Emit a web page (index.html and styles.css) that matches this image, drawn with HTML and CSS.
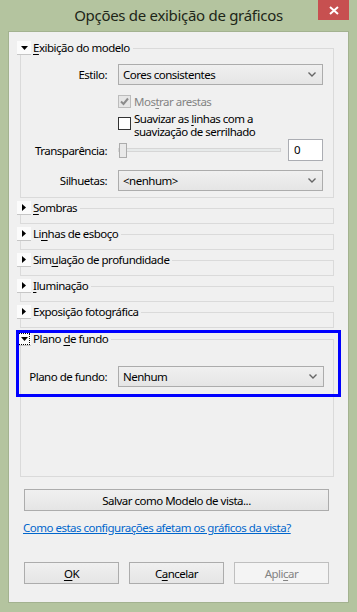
FILE: index.html
```html
<!doctype html>
<html>
  <head>
    <meta charset="utf-8">
    <title>Opções de exibição de gráficos</title>
    <link rel="stylesheet" href="styles.css">
  </head>
  <body>
    <div class="window">
      <header class="titlebar">
        <span></span>
        <h1 class="title">Opções de exibição de gráficos</h1>
        <button class="close" title="Fechar">
          <svg width="10" height="9" viewBox="0 0 10 9"><path d="M1 1 9 8M9 1 1 8" stroke="#fff" stroke-width="2" fill="none"/></svg>
        </button>
      </header>

      <main class="client">
        <!-- model display -->
        <section class="group">
          <div class="group-head">
            <span class="expander"><svg width="7" height="4" viewBox="0 0 7 4"><path d="M0 0h7L3.5 4z"/></svg></span>
            <span class="group-title"><u>E</u>xibição do modelo</span>
            <span class="group-rule"></span>
          </div>
          <div class="group-body model-body">
            <div class="row">
              <span class="label">Estilo:</span>
              <div class="combo">
                <span class="combo-value">Cores consistentes</span>
                <svg width="8" height="5" viewBox="0 0 8 5"><path d="M0.5 0.5 4 4 7.5 0.5" fill="none" stroke="#666" stroke-width="1.4"/></svg>
              </div>
            </div>
            <div class="check check-edges disabled">
              <span class="box"><svg width="11" height="11" viewBox="0 0 11 11"><path d="M2 5.5 4.5 8 9 2.5" fill="none" stroke="#8c8c8c" stroke-width="2"/></svg></span>
              <span>Mos<u>t</u>rar arestas</span>
            </div>
            <div class="check check-smooth">
              <span class="box"></span>
              <span class="check-text">
                <span class="line">Suavizar as <u>l</u>inhas com a</span>
                <span class="line">suavização de serrilhado</span>
              </span>
            </div>
            <div class="row row-transp">
              <span class="label">Transparência:</span>
              <div class="slider">
                <span class="track"></span>
                <span class="thumb"></span>
              </div>
              <span class="textbox">0</span>
            </div>
            <div class="row row-silh">
              <span class="label">Silhuetas:</span>
              <div class="combo">
                <span class="combo-value">&lt;nenhum&gt;</span>
                <svg width="8" height="5" viewBox="0 0 8 5"><path d="M0.5 0.5 4 4 7.5 0.5" fill="none" stroke="#666" stroke-width="1.4"/></svg>
              </div>
            </div>
          </div>
        </section>

        <section class="group">
          <div class="group-head">
            <span class="expander"><svg width="4" height="7" viewBox="0 0 4 7"><path d="M0 0v7l4-3.5z"/></svg></span>
            <span class="group-title"><u>S</u>ombras</span>
            <span class="group-rule"></span>
          </div>
          <div class="group-body"></div>
        </section>

        <section class="group">
          <div class="group-head">
            <span class="expander"><svg width="4" height="7" viewBox="0 0 4 7"><path d="M0 0v7l4-3.5z"/></svg></span>
            <span class="group-title">Li<u>n</u>has de esboço</span>
            <span class="group-rule"></span>
          </div>
          <div class="group-body"></div>
        </section>

        <section class="group">
          <div class="group-head">
            <span class="expander"><svg width="4" height="7" viewBox="0 0 4 7"><path d="M0 0v7l4-3.5z"/></svg></span>
            <span class="group-title">Sim<u>u</u>lação de profundidade</span>
            <span class="group-rule"></span>
          </div>
          <div class="group-body"></div>
        </section>

        <section class="group">
          <div class="group-head">
            <span class="expander"><svg width="4" height="7" viewBox="0 0 4 7"><path d="M0 0v7l4-3.5z"/></svg></span>
            <span class="group-title"><u>I</u>luminação</span>
            <span class="group-rule"></span>
          </div>
          <div class="group-body"></div>
        </section>

        <section class="group">
          <div class="group-head">
            <span class="expander"><svg width="4" height="7" viewBox="0 0 4 7"><path d="M0 0v7l4-3.5z"/></svg></span>
            <span class="group-title">Exposição fotográfica</span>
            <span class="group-rule"></span>
          </div>
          <div class="group-body"></div>
        </section>

        <!-- background, highlighted -->
        <section class="group group-bg">
          <div class="callout"></div>
          <div class="group-head">
            <span class="expander focus"><svg width="7" height="4" viewBox="0 0 7 4"><path d="M0 0h7L3.5 4z"/></svg></span>
            <span class="group-title">Plano <u>d</u>e fundo</span>
            <span class="group-rule"></span>
          </div>
          <div class="group-body bg-body">
            <div class="row">
              <span class="label">Plano de fundo:</span>
              <div class="combo">
                <span class="combo-value">Nenhum</span>
                <svg width="8" height="5" viewBox="0 0 8 5"><path d="M0.5 0.5 4 4 7.5 0.5" fill="none" stroke="#666" stroke-width="1.4"/></svg>
              </div>
            </div>
          </div>
        </section>

        <button class="btn btn-save">Salvar como Modelo de vista...</button>
        <a class="help-link" href="#">Como estas configurações afetam os gráficos da vista?</a>

        <div class="actions">
          <button class="btn"><u>O</u>K</button>
          <button class="btn">C<u>a</u>ncelar</button>
          <button class="btn" disabled>Apli<u>c</u>ar</button>
        </div>
      </main>
    </div>
  </body>
</html>
```

FILE: styles.css
```css
* {
  margin: 0;
  padding: 0;
  box-sizing: border-box;
}

html, body {
  width: 100%;
  height: 100%;
  overflow: hidden;
}

body {
  background: #b4c49f;
  font-family: "Noto Sans", "Open Sans", sans-serif;
  font-size: 11.5px;
  letter-spacing: -0.5px;
  color: #000;
}

u {
  text-decoration-thickness: 1px;
  text-underline-offset: 2px;
}

.window {
  height: 612px;
  display: flex;
  flex-direction: column;
  padding: 0 8px 9px;
}

.titlebar {
  height: 31px;
  display: grid;
  grid-template-columns: 1fr auto 1fr;
  align-items: start;
}

.title {
  font-weight: normal;
  font-size: 15px;
  letter-spacing: -0.3px;
  line-height: 30px;
  color: #1e2618;
}

.close {
  justify-self: end;
  width: 31px;
  height: 20px;
  border: none;
  background: #c75050;

  display: flex;
  align-items: center;
  justify-content: center;
}

.client {
  flex: 1;
  background: #f0f0f0;
  border: 1px solid #a3b290;
  padding: 9px 14px 0 8px;

  display: flex;
  flex-direction: column;
}

/* groups */

.group {
  position: relative;
}

.group + .group {
  margin-top: 3px;
}

.group-bg {
  margin-top: 4px !important;
}

.group-head {
  display: flex;
  align-items: center;
  height: 14px;
}

.expander {
  width: 14px;
  height: 14px;
  background: #fbfbfb;
  border-bottom: 1px solid #c6c6c6;

  display: flex;
  align-items: center;
  justify-content: center;
}

.expander.focus {
  outline: 1px dotted #000;
  outline-offset: -2px;
}

.group-title {
  padding: 0 3px 0 2px;
  line-height: 14px;
  white-space: nowrap;
}

.group-rule {
  flex: 1;
  align-self: stretch;
  margin-top: 7px;
  border-top: 1px solid #dadada;
  border-right: 1px solid #dadada;
}

.group-body {
  margin-left: 3px;
  height: 9px;
  border: 1px solid #dadada;
  border-top: none;
}

.model-body {
  height: auto;
  padding: 9px 10px 6px 0;
}

.bg-body {
  height: 131px;
  padding: 20px 9px 0 0;
}

.callout {
  position: absolute;
  left: -1px;
  top: -2px;
  width: 325px;
  height: 67px;
  border: 3px solid #0000ff;
}

/* form rows */

.row {
  display: flex;
  align-items: center;
}

.label {
  width: 86px;
  margin-right: 11px;
  text-align: right;
  white-space: nowrap;
}

.combo {
  flex: 1;
  height: 21px;
  border: 1px solid #acacac;
  background: linear-gradient(#f0f0f0, #e5e5e5);
  padding: 0 6px 0 4px;

  display: flex;
  align-items: center;
}

.combo-value {
  flex: 1;
}

.check {
  display: flex;
  align-items: center;
  gap: 3px;
  margin-left: 97px;
}

.check-edges {
  margin-top: 7px;
  height: 18px;
}

.check-smooth {
  margin-top: 2px;
  align-items: flex-start;
}

.check-smooth .box {
  margin-top: 5px;
}

.check-text {
  display: flex;
  flex-direction: column;
}

.line {
  height: 13px;
  line-height: 13px;
}

.box {
  width: 13px;
  height: 13px;
  flex: none;
  border: 1px solid #333;
  background: #fff;

  display: flex;
  align-items: center;
  justify-content: center;
}

.check.disabled {
  color: #838383;
}

.check.disabled .box {
  border-color: #bcbcbc;
  background: #e6e6e6;
}

.row-transp {
  margin-top: 1px;
}

.slider {
  flex: 1;
  height: 22px;
  margin-right: 7px;

  display: grid;
  align-items: center;
}

.track,
.thumb {
  grid-area: 1 / 1;
}

.track {
  height: 4px;
  border: 1px solid #d6d6d6;
  background: #e7eaea;
}

.thumb {
  justify-self: start;
  margin-left: 1px;
  width: 8px;
  height: 15px;
  border: 1px solid #acacac;
  background: #e9e9e9;
}

.textbox {
  width: 35px;
  height: 22px;
  border: 1px solid #abadb3;
  background: #fff;
  padding-left: 5px;
  line-height: 20px;
}

.row-silh {
  margin-top: 9px;
}

/* buttons */

.btn {
  height: 22px;
  border: 1px solid #acacac;
  background: linear-gradient(#f0f0f0, #e5e5e5);
  font: inherit;
  letter-spacing: inherit;
  color: #000;
}

.btn:disabled {
  border-color: #bfbfbf;
  background: #f4f4f4;
  color: #838383;
}

.btn-save {
  margin: 12px 0 0 7px;
  width: 305px;
}

.help-link {
  align-self: flex-start;
  margin: 10px 0 0 6px;
  line-height: 14px;
  color: #0066cc;
}

.actions {
  display: flex;
  gap: 10px;
  margin: 27px 0 0 7px;
}

.actions .btn {
  width: 95px;
}
```
